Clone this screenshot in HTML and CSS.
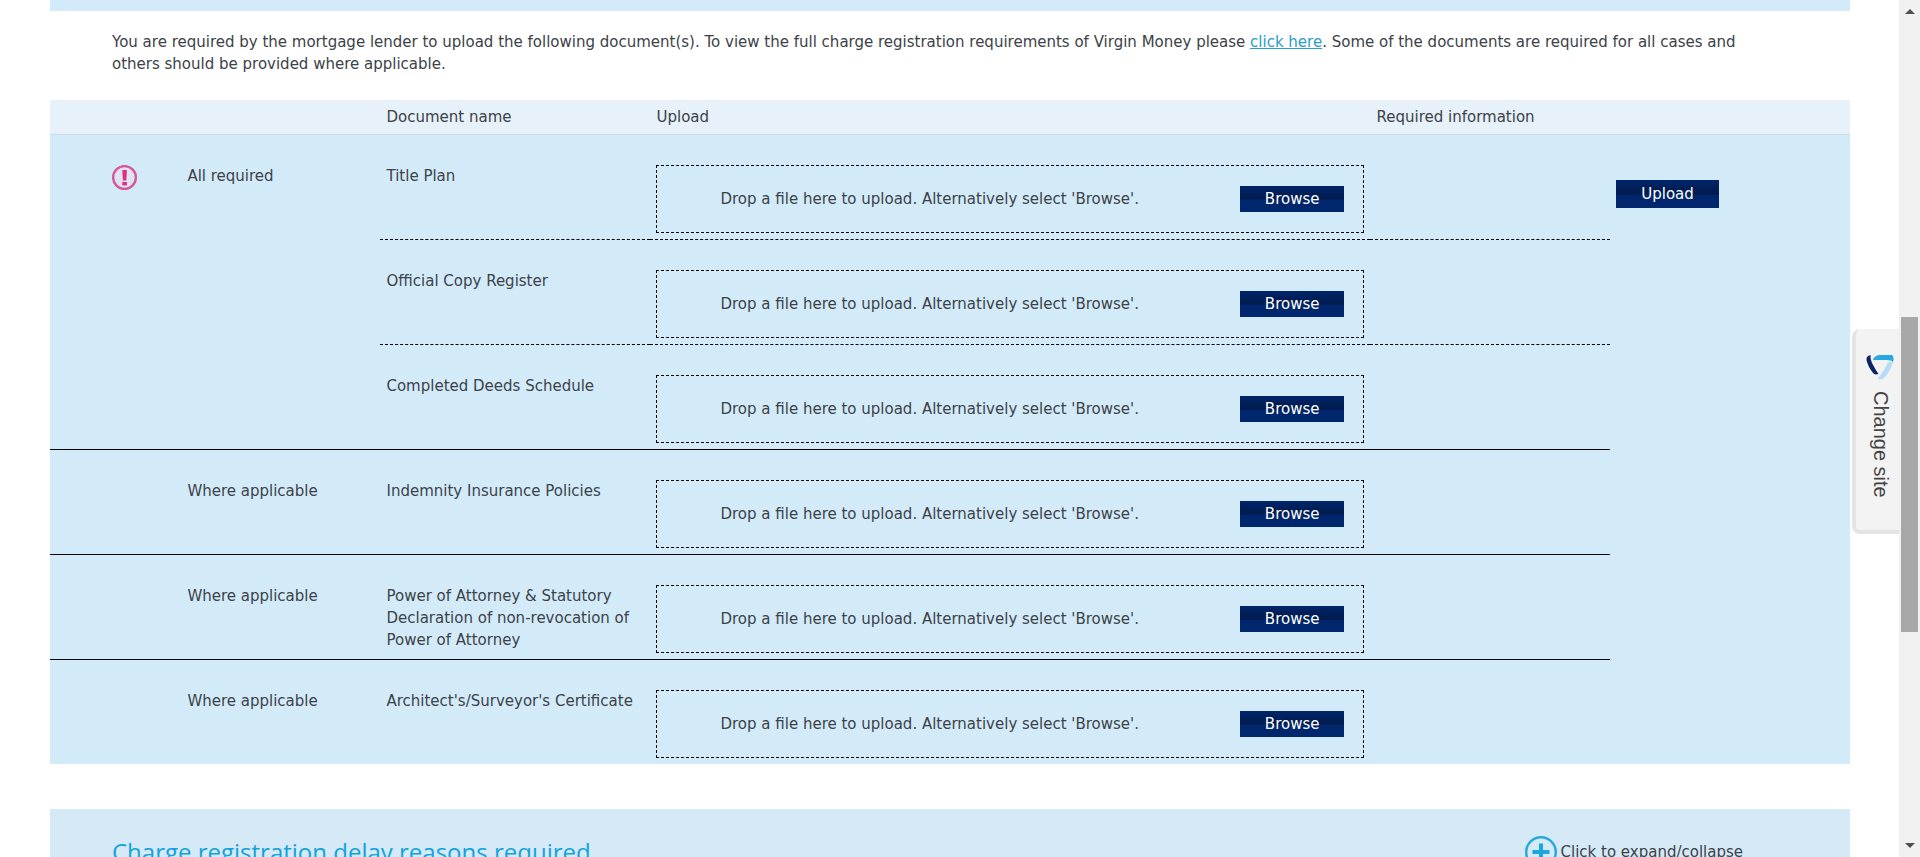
FILE: index.html
```html
<!DOCTYPE html>
<html lang="en">
<head>
<meta charset="utf-8">
<title>Upload documents</title>
<link rel="stylesheet" href="styles.css">
</head>
<body>
<main class="page">
  <div class="band band-end"></div>
  <p class="intro">You are required by the mortgage lender to upload the following document(s). To view the full charge registration requirements of Virgin Money please <a href="#">click here</a>. Some of the documents are required for all cases and others should be provided where applicable.</p>

  <table class="docs">
    <colgroup>
      <col class="c-icon"><col class="c-need"><col class="c-name"><col class="c-upload"><col class="c-info"><col class="c-action">
    </colgroup>
    <thead>
      <tr><th></th><th></th><th scope="col">Document name</th><th scope="col">Upload</th><th scope="col">Required information</th><th></th></tr>
    </thead>
    <tbody>
      <tr class="soft">
        <td class="icon solid" rowspan="3">
          <svg class="alert" viewBox="0 0 26 26" role="img" aria-label="Required"><circle cx="12.500" cy="12.500" r="11.4" fill="#dfe3f2" stroke="#d6579b" stroke-width="2.4"/><path d="M10.300 5h4.600l-.6 10.500h-3.400z" fill="#de2f80"/><rect x="10.300" y="17" width="4.600" height="3.400" fill="#de2f80"/></svg>
        </td>
        <td class="solid" rowspan="3">All required</td>
        <td>Title Plan</td>
        <td><div class="drop"><span>Drop a file here to upload. Alternatively select 'Browse'.</span><button type="button" class="btn">Browse</button></div></td>
        <td></td>
        <td class="action" rowspan="6"><button type="button" class="btn btn-upload">Upload</button></td>
      </tr>
      <tr class="soft">
        <td>Official Copy Register</td>
        <td><div class="drop"><span>Drop a file here to upload. Alternatively select 'Browse'.</span><button type="button" class="btn">Browse</button></div></td>
        <td></td>
      </tr>
      <tr>
        <td>Completed Deeds Schedule</td>
        <td><div class="drop"><span>Drop a file here to upload. Alternatively select 'Browse'.</span><button type="button" class="btn">Browse</button></div></td>
        <td></td>
      </tr>
      <tr>
        <td></td>
        <td>Where applicable</td>
        <td>Indemnity Insurance Policies</td>
        <td><div class="drop"><span>Drop a file here to upload. Alternatively select 'Browse'.</span><button type="button" class="btn">Browse</button></div></td>
        <td></td>
      </tr>
      <tr>
        <td></td>
        <td>Where applicable</td>
        <td>Power of Attorney &amp; Statutory Declaration of non-revocation of Power of Attorney</td>
        <td><div class="drop"><span>Drop a file here to upload. Alternatively select 'Browse'.</span><button type="button" class="btn">Browse</button></div></td>
        <td></td>
      </tr>
      <tr class="last">
        <td></td>
        <td>Where applicable</td>
        <td>Architect's/Surveyor's Certificate</td>
        <td><div class="drop"><span>Drop a file here to upload. Alternatively select 'Browse'.</span><button type="button" class="btn">Browse</button></div></td>
        <td></td>
      </tr>
    </tbody>
  </table>

  <section class="band delay">
    <h2>Charge registration delay reasons required</h2>
    <button type="button" class="toggle">
      <svg viewBox="0 0 32 32" aria-hidden="true"><circle cx="16" cy="16" r="14.8" fill="none" stroke="#25a9da" stroke-width="2.4"/><path d="M16 7.500v17M7.500 16h17" stroke="#1ba6dc" stroke-width="4"/></svg>
      Click to expand/collapse
    </button>
  </section>
</main>

<button type="button" class="site-tab">
  <svg viewBox="0 0 28 26" aria-hidden="true"><path d="M7 5.500Q9 1 14 1H26Q28.500 3 27 8Q25 6 21 6H7z" fill="#27a9df"/><path d="M4.500 1Q0 2 .5 6Q2 13 7.500 19.500Q9 21 12.500 20Q9 15 6 9Q4 5 4.500 1z" fill="#0b2463"/><path d="M22 8.500Q25 7.500 27 8.500Q24 18 18 24Q14 26.500 11.500 24.500Q17 19 22 8.500z" fill="#b5dcf3"/></svg>
  <span>Change site</span>
</button>

<div class="scrollbar" aria-hidden="true">
  <span class="arrow up"></span>
  <span class="thumb"></span>
  <span class="arrow down"></span>
</div>
</body>
</html>
```
FILE: styles.css
```css
* { box-sizing: border-box; }

body {
  display: flex;
  height: 100vh;
  margin: 0;
  overflow: hidden;
  background: #fff;
  color: #3c4248;
  font: 15px/22px Verdana, "DejaVu Sans", sans-serif;
}

button { font: inherit; cursor: pointer; }

.page {
  flex: 1;
  min-width: 0;
  padding: 0 49px 0 50px;
}

.band { background: #d5e9f7; }
.band-end { height: 11px; background: #d3eafb; }

.intro {
  margin: 0;
  padding: 20px 62px 25px;
}
.intro a { color: #2b9cc9; }

.docs {
  width: 100%;
  table-layout: fixed;
  border-spacing: 0;
  background: #d3ebf9;
}
.c-icon { width: 7.3%; }
.c-need { width: 11.06%; }
.c-name { width: 15%; }
.c-upload { width: 40%; }
.c-info { width: 13.32%; }
.c-action { width: 13.32%; }

th {
  padding: 6px;
  border-bottom: 1px solid #cbdbe8;
  background: #e7f1f9;
  font-weight: normal;
  text-align: left;
}

td {
  padding: 30px 6px 6px;
  border-bottom: 1px solid #000;
  vertical-align: top;
}
.soft td { border-bottom-style: dashed; }
.soft td.solid { border-bottom-style: solid; }
.soft td.action, .last td { border-bottom: 0; }
td.icon { padding-left: 62px; }
td.action { padding-top: 45px; }

.alert { display: block; width: 26px; height: 26px; }

.drop {
  display: flex;
  align-items: center;
  justify-content: space-between;
  height: 68px;
  padding: 0 19px 0 63px;
  border: 1px dashed #000;
}

.btn {
  display: block;
  height: 26px;
  padding: 0 25px;
  border: 0;
  background: linear-gradient(#00256a, #001b4d 50%, #00266e 55%, #00266e);
  color: #fff;
}
.btn-upload { height: 28px; }

.delay {
  display: flex;
  align-items: center;
  justify-content: space-between;
  margin-top: 45px;
  padding: 26px 107px 26px 62px;
}
.delay h2 {
  margin: 0;
  color: #12a3dc;
  font: 24px/34px "Trebuchet MS", "Open Sans", sans-serif;
}

.toggle {
  display: flex;
  align-items: center;
  gap: 4px;
  padding: 0;
  border: 0;
  background: none;
  color: inherit;
}
.toggle svg { width: 32px; height: 32px; }

.site-tab {
  position: fixed;
  top: 329px;
  right: 21px;
  display: flex;
  flex-direction: column;
  align-items: center;
  gap: 11px;
  width: 47px;
  height: 205px;
  padding: 25px 0 0 4px;
  border: solid #e4e4e4;
  border-width: 0 0 4px 4px;
  border-radius: 8px 0 0 8px;
  background: #f3f3f3;
  color: #444;
  font: 20px/24px "Liberation Sans", Arial, sans-serif;
}
.site-tab svg { width: 28px; height: 26px; }
.site-tab span { padding-left: 2px; writing-mode: vertical-rl; }

.scrollbar {
  display: flex;
  flex-direction: column;
  align-items: center;
  width: 21px;
  height: 100vh;
  padding: 9px 0;
  background: #f1f1f1;
}
.arrow {
  width: 0;
  height: 0;
  border: solid transparent;
  border-width: 0 5px;
}
.up { border-bottom: 5px solid #505050; }
.down { border-top: 5px solid #505050; margin-top: auto; }
.thumb {
  width: 17px;
  height: 315px;
  margin-top: 303px;
  background: #a8a8a8;
}
```
